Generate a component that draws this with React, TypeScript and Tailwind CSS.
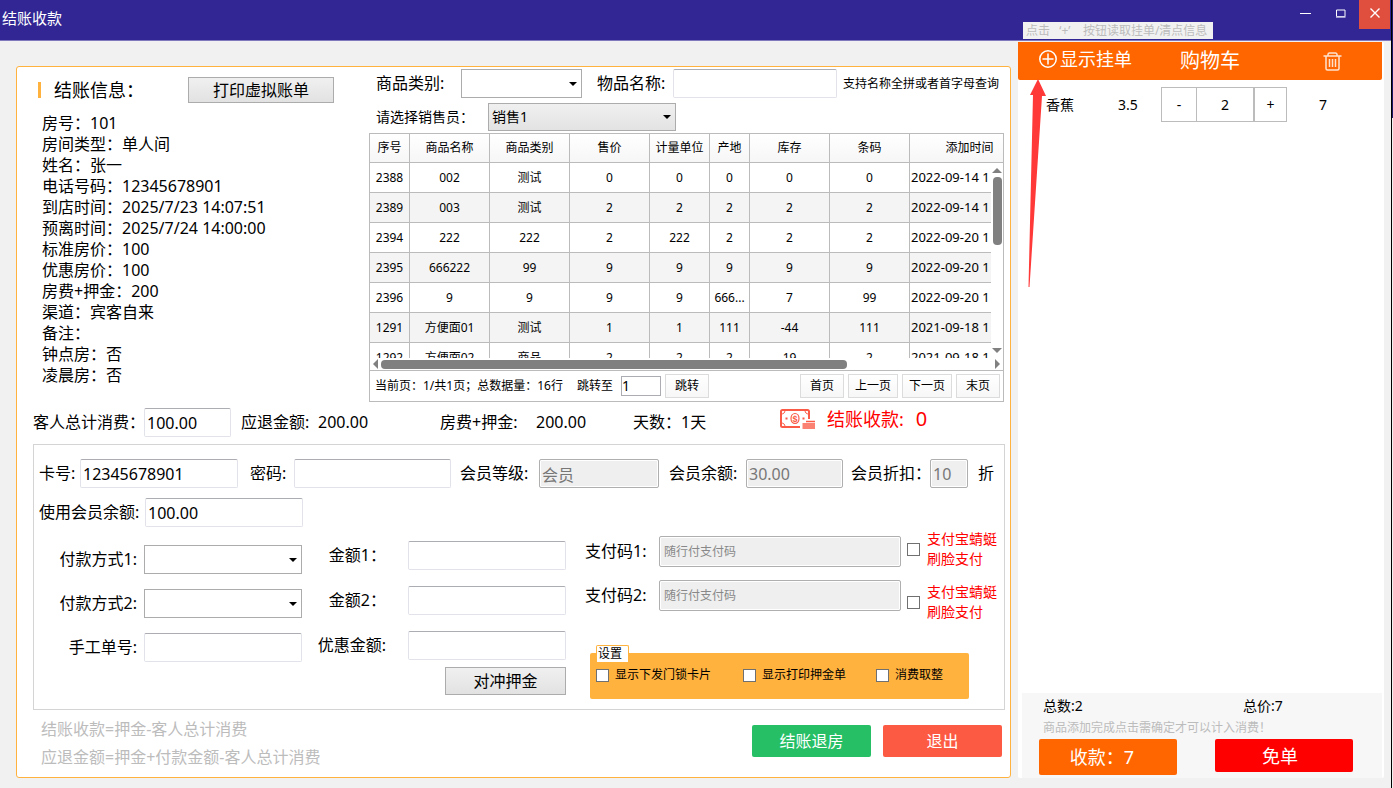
import React, { useState } from 'react';
import { clsx } from 'clsx';

interface Goods {
  id: string;
  name: string;
  category: string;
  price: string;
  unit: string;
  origin: string;
  stock: string;
  barcode: string;
  addedAt: string;
}

const guestInfo = [
  '房号：101',
  '房间类型：单人间',
  '姓名：张一',
  '电话号码：12345678901',
  '到店时间：2025/7/23 14:07:51',
  '预离时间：2025/7/24 14:00:00',
  '标准房价：100',
  '优惠房价：100',
  '房费+押金：200',
  '渠道：宾客自来',
  '备注：',
  '钟点房：否',
  '凌晨房：否',
];

const columns = [
  { title: '序号', width: 'w-[40px]' },
  { title: '商品名称', width: 'w-[80px]' },
  { title: '商品类别', width: 'w-[80px]' },
  { title: '售价', width: 'w-[80px]' },
  { title: '计量单位', width: 'w-[60px]' },
  { title: '产地', width: 'w-[40px]' },
  { title: '库存', width: 'w-[80px]' },
  { title: '条码', width: 'w-[80px]' },
  { title: '添加时间', width: 'w-[120px]' },
];

const goods: Goods[] = [
  { id: '2388', name: '002', category: '测试', price: '0', unit: '0', origin: '0', stock: '0', barcode: '0', addedAt: '2022-09-14 1' },
  { id: '2389', name: '003', category: '测试', price: '2', unit: '2', origin: '2', stock: '2', barcode: '2', addedAt: '2022-09-14 1' },
  { id: '2394', name: '222', category: '222', price: '2', unit: '222', origin: '2', stock: '2', barcode: '2', addedAt: '2022-09-20 1' },
  { id: '2395', name: '666222', category: '99', price: '9', unit: '9', origin: '9', stock: '9', barcode: '9', addedAt: '2022-09-20 1' },
  { id: '2396', name: '9', category: '9', price: '9', unit: '9', origin: '666...', stock: '7', barcode: '99', addedAt: '2022-09-20 1' },
  { id: '1291', name: '方便面01', category: '测试', price: '1', unit: '1', origin: '111', stock: '-44', barcode: '111', addedAt: '2021-09-18 1' },
  { id: '1292', name: '方便面02', category: '商品', price: '2', unit: '2', origin: '2', stock: '19', barcode: '2', addedAt: '2021-09-18 1' },
];

const TextBox: React.FC<React.InputHTMLAttributes<HTMLInputElement>> = ({ className, ...props }) => (
  <input
    type="text"
    className={clsx(
      'h-[29px] min-w-0 rounded-[2px] border px-[2px] outline-none',
      props.disabled
        ? 'border-[#afafaf] bg-[#efefef] text-[#777777] placeholder:text-[#888888] shadow-[inset_0_0_0_1px_#ffffff]'
        : 'border-[#e2e3ea] border-t-[#abadb3] bg-white',
      className
    )}
    {...props}
  />
);

interface ComboProps {
  id: string;
  options?: string[];
  className?: string;
  filled?: boolean;
}

const Combo: React.FC<ComboProps> = ({ id, options = [''], className, filled }) => (
  <div className={clsx('relative shrink-0', className)}>
    <select
      id={id}
      className={clsx(
        'h-full w-full appearance-none border border-[#acacac] pl-[3px] pr-5 outline-none',
        filled ? 'bg-linear-to-b from-[#f0f0f0] to-[#e3e3e3]' : 'bg-white'
      )}
    >
      {options.map(o => <option key={o} value={o}>{o}</option>)}
    </select>
    <svg className="absolute right-[5px] top-1/2 -mt-0.5 pointer-events-none" width="8" height="4" viewBox="0 0 8 4">
      <path d="M0 0h8L4 4z" fill="#000" />
    </svg>
  </div>
);

const GrayButton: React.FC<{ className?: string; children: React.ReactNode }> = ({ className, children }) => (
  <button className={clsx('border border-[#acacac] bg-linear-to-b from-[#f0f0f0] to-[#e2e2e2] text-center', className)}>
    {children}
  </button>
);

const PageButton: React.FC<{ className?: string; children: React.ReactNode }> = ({ className, children }) => (
  <button className={clsx('h-6 border border-[#dcdcdc] bg-linear-to-b from-white to-[#f7f7f7]', className)}>
    {children}
  </button>
);

const Check: React.FC<{ id: string }> = ({ id }) => (
  <input id={id} type="checkbox" className="size-[13px] shrink-0 appearance-none border border-[#707070] bg-white" />
);

const MoneyIcon = () => (
  <svg width="36" height="20" viewBox="0 0 36 20" fill="none">
    <path
      d="M20 18H2.500A1.500 1.500 0 0 1 1 16.500V2.500A1.500 1.500 0 0 1 2.500 1h25A1.500 1.500 0 0 1 29 2.500V10"
      stroke="#fa5a46"
      strokeWidth="2"
    />
    <path d="M1 5C3.500 5 5 4 5 1M29 5C26.500 5 25 4 25 1M1 14C3.500 14 5 15 5 18" stroke="#fa5a46" />
    <ellipse cx="15" cy="9.500" rx="4" ry="5" stroke="#fa5a46" strokeWidth="1.200" />
    <text x="15" y="13" textAnchor="middle" fontSize="9" fontWeight="700" fill="#fa5a46" fontFamily="Liberation Sans">$</text>
    <path d="M5.500 9.500h2M22.500 9.500h2" stroke="#fa5a46" strokeWidth="2" />
    <path d="M26 12.500h9M22.500 15h12.500M22.500 17h12.500M22.500 19h12.500" stroke="#fa5a46" strokeWidth="1.500" />
  </svg>
);

const TitleBar = () => (
  <header className="relative flex h-[41px] items-start justify-between border-b border-[#8079bd] bg-[#312694] text-white">
    <h1 className="pl-[2px] pt-2 text-[15px] leading-5">结账收款</h1>
    <div className="flex pr-px">
      <button aria-label="最小化" className="flex h-[27px] w-[35px] items-center justify-center">
        <svg width="11" height="11" viewBox="0 0 11 11"><path d="M0 5.500h11" stroke="#fff" /></svg>
      </button>
      <button aria-label="最大化" className="flex h-[27px] w-[36px] items-center justify-center">
        <svg width="10" height="10" viewBox="0 0 10 10" fill="none">
          <path d="M.5 1h8.500v6.500H.5z" stroke="#fff" />
          <path d="M0 8h9.500" stroke="#c8c4e6" strokeWidth="1.500" />
        </svg>
      </button>
      <button aria-label="关闭" className="flex h-[29px] w-[31px] items-center justify-center bg-[#e04f3d] pb-[3px]">
        <svg width="10" height="10" viewBox="0 0 10 10"><path d="M.5.5l9 9M9.500.5l-9 9" stroke="#fff" strokeWidth="1.400" /></svg>
      </button>
    </div>
    <div className="absolute right-[178px] top-[22px] h-[17px] w-[190px] whitespace-nowrap bg-[#f1f1f1] pl-[3px] text-xs leading-[17px] text-[#bcbcbc]">
      点击&nbsp;&nbsp; ‘+’ &nbsp;&nbsp;&nbsp;按钮读取挂单/清点信息
    </div>
  </header>
);

const GoodsTable = () => (
  <div className="mt-[2px] border border-[#bbbbbb] text-xs">
    <div className="relative h-[224px] overflow-hidden">
      <table className="w-[660px] table-fixed border-separate border-spacing-0 text-center">
        <thead>
          <tr className="h-[29px] bg-linear-to-b from-white to-[#f6f6f6]">
            {columns.map(c => (
              <th key={c.title} className={clsx('border-b border-r border-[#bbbbbb] p-0 font-normal', c.width)}>{c.title}</th>
            ))}
          </tr>
        </thead>
        <tbody>
          {goods.map((g, i) => (
            <tr key={g.id} className={clsx('h-[30px]', i % 2 === 1 && 'bg-[#f4f4f4]')}>
              {[g.id, g.name, g.category, g.price, g.unit, g.origin, g.stock, g.barcode].map((v, n) => (
                <td key={n} className="border-b border-r border-[#bbbbbb] p-0">{v}</td>
              ))}
              <td className="whitespace-nowrap border-b border-[#bbbbbb] p-0 pl-px text-left text-[13px]">{g.addedAt}</td>
            </tr>
          ))}
        </tbody>
      </table>
      <div className="absolute bottom-0 right-0 top-[29px] flex w-3 flex-col items-center bg-white py-[5px]">
        <svg width="10" height="5" viewBox="0 0 10 5"><path d="M0 5h10L5 0z" fill="#808080" /></svg>
        <div className="mt-1 h-[68px] w-[9px] rounded bg-[#808080]" />
        <svg className="mt-auto" width="10" height="5" viewBox="0 0 10 5"><path d="M0 0h10L5 5z" fill="#808080" /></svg>
      </div>
    </div>
    <div className="flex h-[13px] items-center border-b border-[#bbbbbb] px-[3px]">
      <svg width="5" height="10" viewBox="0 0 5 10"><path d="M5 0v10L0 5z" fill="#808080" /></svg>
      <div className="ml-[3px] h-[9px] w-[466px] rounded bg-[#808080]" />
      <svg className="ml-auto" width="5" height="10" viewBox="0 0 5 10"><path d="M0 0v10l5-5z" fill="#808080" /></svg>
    </div>
    <div className="flex h-[30px] items-center pl-[5px] pr-[3px]">
      <span>当前页：1/共1页；总数据量：16行</span>
      <label htmlFor="jump" className="ml-[14px]">跳转至</label>
      <input id="jump" defaultValue="1" className="ml-2 h-5 w-10 border border-[#abadb3] text-sm outline-none" />
      <PageButton className="ml-1 w-11">跳转</PageButton>
      <div className="ml-auto flex gap-1">
        <PageButton className="w-11">首页</PageButton>
        <PageButton className="w-[50px]">上一页</PageButton>
        <PageButton className="w-[50px]">下一页</PageButton>
        <PageButton className="w-11">末页</PageButton>
      </div>
    </div>
  </div>
);

const MemberPanel = () => (
  <section className="ml-4 mr-[5px] mt-[7px] whitespace-nowrap border border-[#d4d4d4] pb-[10px] pl-[5px] pt-[14px]">
    <div className="flex items-center">
      <label htmlFor="card" className="w-[41px]">卡号:</label>
      <TextBox id="card" defaultValue="12345678901" className="w-[158px]" />
      <label htmlFor="pwd" className="ml-3 w-11">密码:</label>
      <TextBox id="pwd" type="password" className="w-[157px]" />
      <label htmlFor="level" className="ml-[9px] w-[79px]">会员等级:</label>
      <TextBox id="level" disabled defaultValue="会员" className="w-[120px]" />
      <label htmlFor="balance" className="ml-[10px] w-[77px]">会员余额:</label>
      <TextBox id="balance" disabled defaultValue="30.00" className="w-[97px]" />
      <label htmlFor="discount" className="ml-2 w-[79px]">会员折扣：</label>
      <TextBox id="discount" disabled defaultValue="10" className="w-[38px]" />
      <span className="ml-[10px]">折</span>
    </div>
    <div className="mt-[10px] flex items-center">
      <label htmlFor="useBalance" className="w-[106px]">使用会员余额:</label>
      <TextBox id="useBalance" defaultValue="100.00" className="w-[158px]" />
    </div>

    <div className="flex items-start">
      <div className="flex w-[263px] flex-col gap-[15px] pt-[18px]">
        <div className="flex items-center justify-end gap-[7px]">
          <label htmlFor="pay1">付款方式1:</label>
          <Combo id="pay1" className="h-[29px] w-[158px]" />
        </div>
        <div className="flex items-center justify-end gap-[7px]">
          <label htmlFor="pay2">付款方式2:</label>
          <Combo id="pay2" className="h-[29px] w-[158px]" />
        </div>
        <div className="flex items-center justify-end gap-[7px]">
          <label htmlFor="manual">手工单号:</label>
          <TextBox id="manual" className="w-[158px]" />
        </div>
      </div>

      <div className="ml-[14px] flex w-[250px] flex-col gap-4 pt-[14px]">
        <div className="flex items-center">
          <label htmlFor="amount1" className="mr-[22px] w-[70px] text-right">金额1：</label>
          <TextBox id="amount1" className="w-[158px]" />
        </div>
        <div className="flex items-center">
          <label htmlFor="amount2" className="mr-[22px] w-[70px] text-right">金额2：</label>
          <TextBox id="amount2" className="w-[158px]" />
        </div>
        <div className="flex flex-col gap-[7px]">
          <div className="flex items-center">
            <label htmlFor="off" className="mr-[22px] w-[70px] text-right">优惠金额:</label>
            <TextBox id="off" className="w-[158px]" />
          </div>
          <GrayButton className="h-7 w-[121px] self-end">对冲押金</GrayButton>
        </div>
      </div>

      <div className="ml-[19px]">
        <div className="flex items-start">
          <div className="flex flex-col gap-[13px] pt-[9px]">
            <div className="flex items-center">
              <label htmlFor="code1" className="w-[74px]">支付码1:</label>
              <TextBox id="code1" disabled placeholder="随行付支付码" className="h-[31px] w-[242px] pl-1 text-xs" />
            </div>
            <div className="flex items-center">
              <label htmlFor="code2" className="w-[74px]">支付码2:</label>
              <TextBox id="code2" disabled placeholder="随行付支付码" className="h-[31px] w-[242px] pl-1 text-xs" />
            </div>
          </div>
          <div className="ml-[6px] flex flex-col gap-[13px] pt-[2px] text-sm leading-5 text-[#ff0000]">
            <div className="flex items-center gap-[7px]">
              <Check id="face1" />
              <label htmlFor="face1">支付宝蜻蜓<br />刷脸支付</label>
            </div>
            <div className="flex items-center gap-[7px]">
              <Check id="face2" />
              <label htmlFor="face2">支付宝蜻蜓<br />刷脸支付</label>
            </div>
          </div>
        </div>
        <div role="group" aria-labelledby="settings" className="relative ml-[5px] mt-[31px] flex h-[46px] w-[379px] items-center rounded-[2px] bg-[#ffb23e] pb-[2px] pl-[6px] text-xs">
          <span id="settings" className="absolute -top-2 left-[6px] w-[33px] rounded-t-[2px] border border-b-0 border-[#ffb23e] bg-white pl-px leading-4">设置</span>
          <div className="flex w-[147px] items-center gap-[6px]">
            <Check id="lockCard" />
            <label htmlFor="lockCard">显示下发门锁卡片</label>
          </div>
          <div className="flex w-[133px] items-center gap-[6px]">
            <Check id="printBill" />
            <label htmlFor="printBill">显示打印押金单</label>
          </div>
          <div className="flex items-center gap-[6px]">
            <Check id="round" />
            <label htmlFor="round">消费取整</label>
          </div>
        </div>
      </div>
    </div>
  </section>
);

const Cart = () => {
  const [count, setCount] = useState(2);
  const total = count * 3.5;

  return (
    <aside className="relative mt-px flex w-[366px] shrink-0 flex-col rounded-[2px] bg-white">
      <div className="mr-[2px] flex h-[38px] items-center rounded-b-[2px] bg-[#ff6600] pl-[21px] text-white">
        <button className="flex w-[141px] items-center gap-[3px] self-start text-lg leading-[34px]">
          <svg width="18" height="18" viewBox="0 0 18 18" fill="none" stroke="#fff" strokeWidth="1.500">
            <circle cx="9" cy="9" r="8.200" />
            <path d="M9 3.500v11M3.500 9h11" />
          </svg>
          显示挂单
        </button>
        <h2 className="text-xl leading-[38px]">购物车</h2>
        <button aria-label="清空购物车" className="ml-auto mr-[40px]">
          <svg width="19" height="19" viewBox="0 0 19 19" fill="none" stroke="#ffe3cf" strokeWidth="1.500">
            <path d="M.5 4h18M5 4V2.500A1.500 1.500 0 0 1 6.500 1h6A1.500 1.500 0 0 1 14 2.500V4M3 4v12.500A1.500 1.500 0 0 0 4.500 18h10a1.500 1.500 0 0 0 1.500-1.500V4M6.500 7v8M9.500 7v8M12.500 7v8" />
          </svg>
        </button>
      </div>

      <div className="mt-[7px] flex items-center pl-7 text-sm">
        <span className="w-[72px]">香蕉</span>
        <span className="w-[43px]">3.5</span>
        <div className="flex h-[35px] w-[126px] border border-[#bcbcbc]">
          <button className="w-[34px]" onClick={() => setCount(Math.max(0, count - 1))}>-</button>
          <input
            aria-label="数量"
            readOnly
            value={count}
            className="w-[59px] min-w-0 border-l border-r-2 border-[#bcbcbc] text-center outline-none"
          />
          <button className="flex-1" onClick={() => setCount(count + 1)}>+</button>
        </div>
        <span className="ml-8">{total}</span>
      </div>

      <div className="ml-1 mr-[2px] mt-auto bg-[#f7f7f7] pb-[3px] pl-[17px]">
        <div className="flex pl-1 pt-[2px] text-sm leading-[22px]">
          <span className="w-[200px]">总数:{count}</span>
          <span>总价:{total}</span>
        </div>
        <p className="pl-1 text-xs leading-[22px] text-[#bcbcbc]">商品添加完成点击需确定才可以计入消费！</p>
        <div className="flex items-start gap-[38px] text-lg text-white">
          <button className="h-9 w-[138px] rounded-[2px] bg-[#ff6600] pr-3">收款：{total}</button>
          <button className="h-[33px] w-[138px] rounded-[2px] bg-[#ff0000] pr-2">免单</button>
        </div>
      </div>

      {/* pointer towards the pending order button */}
      <svg className="absolute left-[9px] top-[37px] pointer-events-none" width="22" height="210" viewBox="0 0 22 210">
        <path d="M11 0L19 17L15 17L2.500 208L1.500 208L6 16L3 16z" fill="#ff3838" />
      </svg>
    </aside>
  );
};

export default function App() {
  return (
    <div className="flex min-h-screen bg-[#f1f1f1] font-['Noto_Sans','Noto_Sans_CJK_SC',sans-serif] text-base leading-[21px] text-black">
      <div className="flex min-w-0 flex-1 flex-col">
        <TitleBar />
        <main className="flex flex-1 gap-[7px] pb-[10px] pl-4 pr-[7px]">
          <div className="mt-[25px] min-w-0 flex-1 rounded-[3px] border border-[#ffb23e] bg-white">
            <div className="flex">
              <section className="w-[352px] shrink-0 pl-[21px] pt-[10px]">
                <div className="flex items-center">
                  <span className="h-4 w-[3px] bg-[#ffb23e]" />
                  <h2 className="ml-[13px] w-[134px] text-lg leading-6">结账信息：</h2>
                  <GrayButton className="h-[26px] w-[146px]">打印虚拟账单</GrayButton>
                </div>
                <ul className="mt-[10px] pl-1">
                  {guestInfo.map(line => <li key={line}>{line}</li>)}
                </ul>
              </section>

              <section className="mr-[6px] min-w-0 flex-1 pt-[2px]">
                <div className="flex items-center whitespace-nowrap pl-[7px]">
                  <label htmlFor="category" className="w-[85px] shrink-0">商品类别:</label>
                  <Combo id="category" className="h-[29px] w-[121px]" />
                  <label htmlFor="goodsName" className="ml-[15px] w-[76px] shrink-0">物品名称:</label>
                  <TextBox id="goodsName" className="flex-1" />
                  <span className="ml-[6px] mr-[5px] text-xs">支持名称全拼或者首字母查询</span>
                </div>
                <div className="mt-[5px] flex items-center pl-[7px] text-sm">
                  <label htmlFor="seller" className="w-[112px] shrink-0">请选择销售员：</label>
                  <Combo id="seller" options={['销售1']} filled className="h-7 w-[188px]" />
                </div>
                <GoodsTable />
              </section>
            </div>

            <div className="mt-[6px] flex items-center whitespace-nowrap pl-4">
              <label htmlFor="spent" className="w-[111px]">客人总计消费：</label>
              <TextBox id="spent" defaultValue="100.00" className="w-[87px]" />
              <span className="ml-[10px] w-[77px]">应退金额:</span>
              <span className="w-[122px]">200.00</span>
              <span className="w-24">房费+押金:</span>
              <span className="w-[97px]">200.00</span>
              <span className="w-[147px]">天数：1天</span>
              <div className="flex items-center self-start text-lg leading-[22px] text-[#ff0000]">
                <MoneyIcon />
                <span className="ml-[11px]">结账收款:</span>
                <span className="ml-3 text-xl leading-[22px]">0</span>
              </div>
            </div>

            <MemberPanel />

            <footer className="flex items-start justify-between pb-[5px] pl-6 pr-2 pt-[5px]">
              <div className="leading-7 text-[#bcbcbc]">
                <p>结账收款=押金-客人总计消费</p>
                <p>应退金额=押金+付款金额-客人总计消费</p>
              </div>
              <div className="flex gap-3 pt-[10px] text-white">
                <button className="h-8 w-[119px] rounded-[2px] bg-[#26bf66]">结账退房</button>
                <button className="h-8 w-[119px] rounded-[2px] bg-[#fc5a43]">退出</button>
              </div>
            </footer>
          </div>

          <Cart />
        </main>
      </div>
      <div className="w-[2px] shrink-0 border-l border-black">
        <div className="h-[118px] bg-[#1e1768]" />
      </div>
    </div>
  );
}
